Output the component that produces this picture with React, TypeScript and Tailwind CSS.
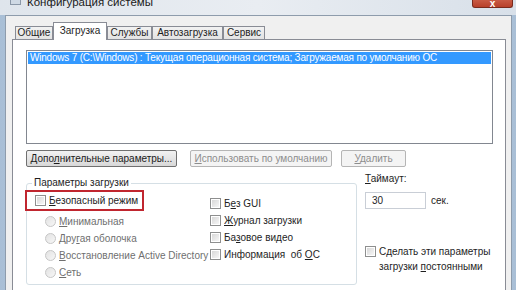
import React from "react";

function U({ children }: { children: React.ReactNode }) {
  return <span className="underline underline-offset-[1px]">{children}</span>;
}

function CheckBox() {
  return (
    <span className="inline-block h-[11px] w-[11px] shrink-0 border border-[#8e8f8f] bg-white p-[1px]">
      <span className="block h-full w-full bg-gradient-to-br from-[#d8d8d8] to-[#f6f6f6]" />
    </span>
  );
}

function Radio() {
  return (
    <span className="inline-block h-[11px] w-[11px] shrink-0 rounded-full border border-[#c6c6c6] bg-gradient-to-br from-[#e2e2e2] to-[#f7f7f7]" />
  );
}

function Tab({ label, active, w }: { label: string; active?: boolean; w: string }) {
  return (
    <div
      className={
        (active
          ? "relative -mb-px h-[18px] border-b-0 bg-white pb-[2px] "
          : "h-[13px] bg-gradient-to-b from-[#f2f2f2] to-[#e3e3e3] ") +
        "flex items-center justify-center border border-b-0 border-[#898c95] " +
        w
      }
    >
      {label}
    </div>
  );
}

function Button({ children, disabled, w }: { children: React.ReactNode; disabled?: boolean; w: string }) {
  return (
    <div
      className={
        (disabled
          ? "border-[#b5b5b5] bg-[#f4f4f4] text-[#8d8d8d] "
          : "border-[#707070] bg-gradient-to-b from-[#f2f2f2] to-[#d8d8d8] text-[#1b1b1b] ") +
        "flex h-[17px] items-center justify-center rounded-[2px] border " +
        w
      }
    >
      <span>{children}</span>
    </div>
  );
}

export default function App() {
  return (
    <div
      className="flex h-[290px] w-[516px] flex-col overflow-hidden whitespace-nowrap bg-gradient-to-r from-[#a9bfd6] via-[#d7e1ec] to-[#a9bfd6] text-[10px] leading-none text-[#1e1e1e]"
      style={{ fontFamily: '"Liberation Sans", Arial, sans-serif' }}
    >
      {/* title bar */}
      <div className="flex h-[15px] shrink-0 items-start bg-gradient-to-r from-[#dfe5ec] via-[#e9edf2] to-[#d8e0e9] pl-[10px] pr-[3px]">
        <span className="mt-[-6px] h-[11px] w-[11px] border border-[#8b98a8] bg-[#cfd9e4]" />
        <span className="ml-[6px] mt-[-3px] text-[11.5px] text-[#1b1b1b]">Конфигурация системы</span>
        <div className="ml-auto flex h-[8px] w-[41px] items-end justify-center rounded-b-[3px] border border-t-0 border-[#7a2a1c] bg-gradient-to-b from-[#c85a44] to-[#b8402a]">
          <span className="mb-[-2px] text-[10px] font-bold leading-none text-white">x</span>
        </div>
      </div>

      {/* client area */}
      <div className="ml-[5px] mr-[4px] flex-1 border border-[#8e9cac] bg-[#f0f0f0] pl-[6px] pr-[5px] pt-[6px]">
        <div className="flex items-end pl-[3px]">
          <Tab label="Общие" w="w-[38px]" />
          <Tab label="Загрузка" active w="w-[54px]" />
          <Tab label="Службы" w="w-[45px]" />
          <Tab label="Автозагрузка" w="w-[71px]" />
          <Tab label="Сервис" w="w-[42px]" />
        </div>

        <div className="h-[260px] border border-[#898c95] bg-white pl-[13px] pr-[12px] pt-[10px]">
          {/* OS list */}
          <div className="h-[94px] border border-[#828790] bg-white p-px">
            <div className="flex h-[12px] items-center bg-[#3399ff] pl-[2px] tracking-[-0.2px] text-white">
              Windows 7 (C:\Windows) : Текущая операционная система; Загружаемая по умолчанию ОС
            </div>
          </div>

          {/* buttons */}
          <div className="mt-[6px] flex">
            <Button w="w-[151px]">
              Допо<U>л</U>нительные параметры...
            </Button>
            <div className="ml-[13px]">
              <Button disabled w="w-[142px]">
                <U>И</U>спользовать по умолчанию
              </Button>
            </div>
            <div className="ml-[9px]">
              <Button disabled w="w-[65px]">
                <U>У</U>далить
              </Button>
            </div>
          </div>

          {/* bottom area */}
          <div className="mt-[9px] flex">
            <div className="relative mt-[7px] h-[102px] w-[331px] rounded-[3px] border border-[#d5dfe5] pt-[6px]">
              <span className="absolute left-[5px] top-[-6px] bg-white px-[2px]">Параметры загрузки</span>
              <div className="flex">
                <div className="w-[183px]">
                  <div className="ml-[-2px] flex h-[21px] w-[119px] items-center border-2 border-[#c0262f] pl-[8px]">
                    <CheckBox />
                    <span className="ml-[3px]">
                      <U>Б</U>езопасный режим
                    </span>
                  </div>
                  <div className="ml-[18px] mt-[5px] flex flex-col gap-[6px] text-[#6f6f6f]">
                    <div className="flex items-center gap-[3px]">
                      <Radio />
                      <span>
                        <U>М</U>инимальная
                      </span>
                    </div>
                    <div className="flex items-center gap-[3px]">
                      <Radio />
                      <span>
                        Дру<U>г</U>ая оболочка
                      </span>
                    </div>
                    <div className="flex items-center gap-[3px]">
                      <Radio />
                      <span>
                        <U>В</U>осстановление Active Directory
                      </span>
                    </div>
                    <div className="flex items-center gap-[3px]">
                      <Radio />
                      <span>
                        <U>С</U>еть
                      </span>
                    </div>
                  </div>
                </div>
                <div className="mt-[8px] flex flex-col gap-[6px]">
                  <div className="flex items-center gap-[3px]">
                    <CheckBox />
                    <span>
                      Б<U>е</U>з GUI
                    </span>
                  </div>
                  <div className="flex items-center gap-[3px]">
                    <CheckBox />
                    <span>
                      <U>Ж</U>урнал загрузки
                    </span>
                  </div>
                  <div className="flex items-center gap-[3px]">
                    <CheckBox />
                    <span>
                      Ба<U>з</U>овое видео
                    </span>
                  </div>
                  <div className="flex items-center gap-[3px]">
                    <CheckBox />
                    <span>
                      Информация&nbsp; об <U>О</U>С
                    </span>
                  </div>
                </div>
              </div>
            </div>

            <div className="ml-[8px] flex flex-col">
              <span className="mt-[-2px]">
                <U>Т</U>аймаут:
              </span>
              <div className="mt-[8px] flex items-center">
                <div className="flex h-[17px] w-[61px] items-center border border-[#c9ced6] bg-white pl-[6px]">30</div>
                <span className="ml-[5px]">сек.</span>
              </div>
              <div className="mt-[37px] flex items-start gap-[3px]">
                <CheckBox />
                <span className="mt-[-2px] leading-[15px]">
                  Сделать эти параметры
                  <br />
                  загрузки <U>п</U>остоянными
                </span>
              </div>
            </div>
          </div>
        </div>
      </div>
    </div>
  );
}
